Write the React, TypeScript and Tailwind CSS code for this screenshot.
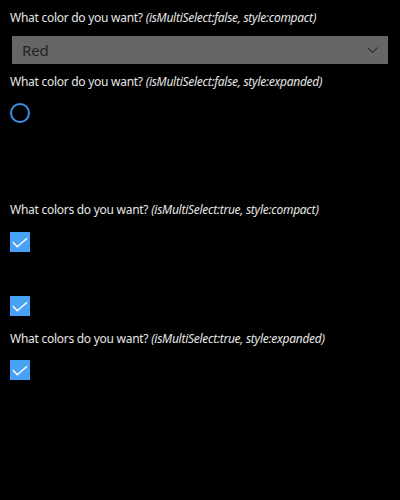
import React from 'react';

const FONT = { fontFamily: '"Noto Sans", "Open Sans", sans-serif' };

function Label({ main, hint, className }: { main: string; hint: string; className?: string }) {
  return (
    <div className={`h-4 leading-4 text-[12px] tracking-[-0.27px] text-[#e6e6e6] whitespace-nowrap ${className ?? ''}`}>
      {main} <span className="italic">{hint}</span>
    </div>
  );
}

function Check({ className }: { className?: string }) {
  return (
    <div className={`w-5 h-5 bg-[#47a1f5] ${className ?? ''}`}>
      <svg width="20" height="20" viewBox="0 0 20 20">
        <path d="M2.8 10 L7.3 14.8 L17 6.3" fill="none" stroke="#fff" strokeWidth="1.4" />
      </svg>
    </div>
  );
}

export default function App() {
  return (
    <div className="w-[400px] h-[500px] bg-black px-[10px] pt-[10px]" style={FONT}>
      <Label main="What color do you want?" hint="(isMultiSelect:false, style:compact)" />

      <div className="mt-[10px] ml-[2px] w-[376px] h-7 bg-[#666666] flex items-center justify-between pl-[10px] pr-[10px]">
        <span className="text-[15px] tracking-[-0.2px] text-[#222222]">Red</span>
        <svg width="11" height="7" viewBox="0 0 11 7">
          <path d="M0.5 0.5 L5.5 5.5 L10.5 0.5" fill="none" stroke="#333" strokeWidth="1.2" />
        </svg>
      </div>

      <Label className="mt-[10px]" main="What color do you want?" hint="(isMultiSelect:false, style:expanded)" />
      <div className="mt-[13px] w-5 h-5 rounded-full border-2 border-[#3a92ec]" />

      <Label className="mt-[79px]" main="What colors do you want?" hint="(isMultiSelect:true, style:compact)" />
      <Check className="mt-[14px]" />
      <Check className="mt-[44px]" />

      <Label className="mt-[15px]" main="What colors do you want?" hint="(isMultiSelect:true, style:expanded)" />
      <Check className="mt-[13px]" />
    </div>
  );
}
